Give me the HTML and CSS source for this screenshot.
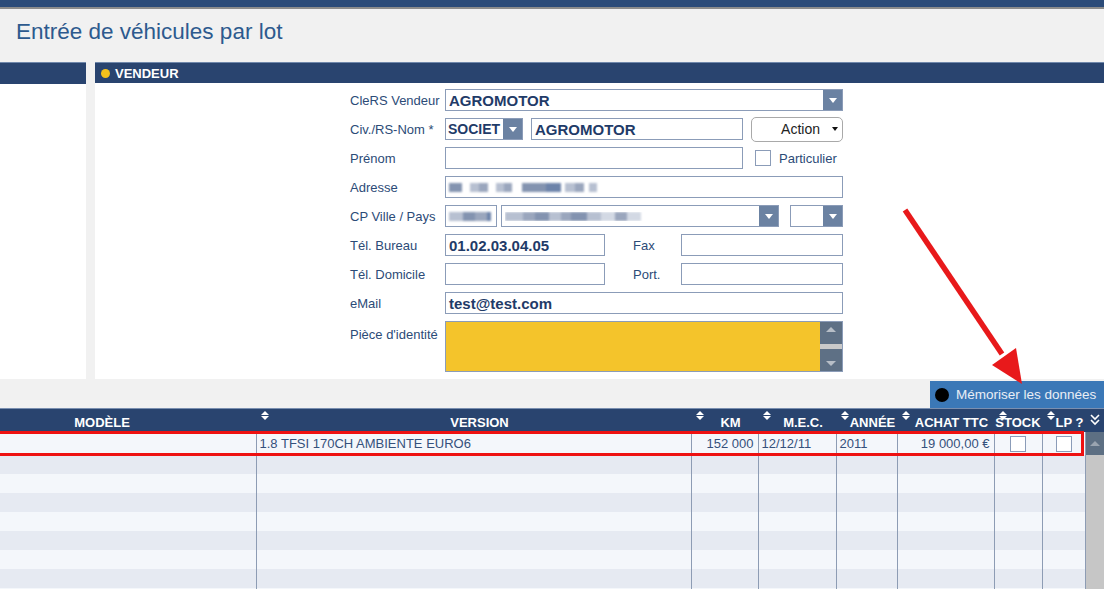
FILE: index.html
```html
<!DOCTYPE html>
<html lang="fr">
<head>
    <meta charset="UTF-8">
    <title>Entrée de véhicules par lot</title>
    <link rel="stylesheet" href="styles.css">
</head>
<body>
<div class="page">
    <div class="topbar"></div>
    <h1>Entrée de véhicules par lot</h1>

    <div class="panels">
        <div class="panel side">
            <div class="panel-head"></div>
        </div>
        <div class="panel main">
            <div class="panel-head"><span class="dot"></span>VENDEUR</div>
            <div class="form">
                <div class="row">
                    <label>CleRS Vendeur</label>
                    <div class="field select w398"><span class="val">AGROMOTOR</span><span class="drop"></span></div>
                </div>
                <div class="row">
                    <label>Civ./RS-Nom *</label>
                    <div class="field select w78 small"><span class="val">SOCIET</span><span class="drop"></span></div>
                    <div class="field w212 ml8">AGROMOTOR</div>
                    <div class="action ml8">Action <span class="caret"></span></div>
                </div>
                <div class="row">
                    <label>Prénom</label>
                    <div class="field w298"></div>
                    <span class="check ml12"></span>
                    <span class="txt ml8">Particulier</span>
                </div>
                <div class="row">
                    <label>Adresse</label>
                    <div class="field w398">
                        <span class="blur">
                            <i class="b1" style="width:13px"></i><i class="b2" style="width:9px;margin-left:8px"></i><i class="b3" style="width:9px"></i><i class="b2" style="width:8px;margin-left:8px"></i><i class="b3" style="width:8px"></i><i class="b1" style="width:24px;margin-left:10px"></i><i class="b4" style="width:15px"></i><i class="b2" style="width:10px;margin-left:4px"></i><i class="b3" style="width:9px"></i><i class="b2" style="width:8px;margin-left:5px"></i>
                        </span>
                    </div>
                </div>
                <div class="row">
                    <label>CP Ville / Pays</label>
                    <div class="field w52">
                        <span class="blur"><i class="b2" style="width:14px"></i><i class="b1" style="width:12px"></i><i class="b3" style="width:12px"></i><i class="b4" style="width:4px"></i></span>
                    </div>
                    <div class="field select w278 ml4">
                        <span class="val"><span class="blur"><i class="b2" style="width:18px"></i><i class="b3" style="width:12px"></i><i class="b1" style="width:14px"></i><i class="b2" style="width:12px"></i><i class="b3" style="width:10px"></i><i class="b1" style="width:16px"></i><i class="b2" style="width:14px"></i><i class="b5" style="width:14px"></i><i class="b3" style="width:12px"></i><i class="b5" style="width:14px"></i></span></span><span class="drop"></span>
                    </div>
                    <div class="field select w53 ml11"><span class="val"></span><span class="drop"></span></div>
                </div>
                <div class="row">
                    <label>Tél. Bureau</label>
                    <div class="field w160">01.02.03.04.05</div>
                    <span class="txt sub-label">Fax</span>
                    <div class="field w162"></div>
                </div>
                <div class="row">
                    <label>Tél. Domicile</label>
                    <div class="field w160"></div>
                    <span class="txt sub-label">Port.</span>
                    <div class="field w162"></div>
                </div>
                <div class="row">
                    <label>eMail</label>
                    <div class="field w398">test@test.com</div>
                </div>
                <div class="row tall">
                    <label>Pièce d'identité</label>
                    <div class="memo w398">
                        <div class="vscroll">
                            <span class="up"></span>
                            <span class="thumb"></span>
                            <span class="down"></span>
                        </div>
                    </div>
                </div>
            </div>
        </div>
    </div>

    <div class="save-bar">
        <div class="save-btn">Mémoriser les données</div>
    </div>

    <div class="grid">
        <table>
            <colgroup>
                <col style="width:320px"><col style="width:435px"><col style="width:67px"><col style="width:78px">
                <col style="width:61px"><col style="width:97px"><col style="width:48px"><col style="width:43px"><col style="width:19px">
            </colgroup>
            <thead>
                <tr>
                    <th>MODÈLE</th>
                    <th><span class="sort"></span>VERSION</th>
                    <th><span class="sort"></span>KM</th>
                    <th><span class="sort"></span>M.E.C.</th>
                    <th><span class="sort"></span>ANNÉE</th>
                    <th><span class="sort"></span>ACHAT TTC</th>
                    <th class="tight"><span class="sort"></span>STOCK</th>
                    <th><span class="sort"></span>LP ?</th>
                    <th class="more">
                        <svg width="10" height="13" viewBox="0 0 10 13"><path d="M1 2 L5 6 L9 2 M1 7 L5 11 L9 7" fill="none" stroke="#fff" stroke-width="1.6"/></svg>
                    </th>
                </tr>
            </thead>
            <tbody>
                <tr class="first">
                    <td></td>
                    <td>1.8 TFSI 170CH AMBIENTE EURO6</td>
                    <td class="num">152 000</td>
                    <td>12/12/11</td>
                    <td>2011</td>
                    <td class="num">19 000,00 €</td>
                    <td class="mid"><span class="check"></span></td>
                    <td class="mid"><span class="check"></span></td>
                    <td class="sc-up"><span class="up"></span></td>
                </tr>
                <tr><td></td><td></td><td></td><td></td><td></td><td></td><td></td><td></td><td class="sc-track" rowspan="8"></td></tr>
                <tr><td></td><td></td><td></td><td></td><td></td><td></td><td></td><td></td></tr>
                <tr><td></td><td></td><td></td><td></td><td></td><td></td><td></td><td></td></tr>
                <tr><td></td><td></td><td></td><td></td><td></td><td></td><td></td><td></td></tr>
                <tr><td></td><td></td><td></td><td></td><td></td><td></td><td></td><td></td></tr>
                <tr><td></td><td></td><td></td><td></td><td></td><td></td><td></td><td></td></tr>
                <tr><td></td><td></td><td></td><td></td><td></td><td></td><td></td><td></td></tr>
                <tr><td></td><td></td><td></td><td></td><td></td><td></td><td></td><td></td></tr>
            </tbody>
        </table>
        <div class="highlight"></div>
    </div>

    <svg class="arrow" width="1104" height="589" viewBox="0 0 1104 589">
        <line x1="905" y1="210" x2="1002" y2="354" stroke="#e8191b" stroke-width="5.5"/>
        <polygon points="992,365 1016,348 1022,384" fill="#e8191b"/>
    </svg>
</div>
</body>
</html>
```

FILE: styles.css
```css
body { margin: 0; font-family: "Liberation Sans", Arial, sans-serif; background: #fff; }
.page { position: relative; width: 1104px; height: 589px; background: #f1f1f1; overflow: hidden; }
.topbar { height: 7px; background: #2b4b79; border-bottom: 2px solid #8c8c8c; }
h1 { margin: 0; height: 53px; padding: 10px 0 0 16px; box-sizing: border-box; font-size: 22.5px; font-weight: normal; color: #2d5a8e; }

/* panels */
.panels { display: flex; gap: 9px; height: 317px; }
.panel { background: #fff; display: flex; flex-direction: column; }
.side { width: 86px; }
.main { flex: 1; }
.panel-head { height: 22px; box-sizing: border-box; background: #29446f; border-top: 1px solid #7088ab; color: #fff; font-weight: bold; font-size: 13px; display: flex; align-items: center; gap: 5px; padding-left: 6px; }
.dot { width: 9px; height: 9px; border-radius: 50%; background: #f4c21c; }

/* form */
.form { padding: 6px 0 0 255px; }
.row { display: flex; align-items: center; height: 22px; margin-bottom: 7px; }
.row label { width: 95px; flex: none; font-size: 13px; color: #2c4b77; white-space: nowrap; }
.row.tall { height: 51px; align-items: flex-start; }
.row.tall label { padding-top: 6px; }
.txt { font-size: 13px; color: #2c4b77; }
.sub-label { width: 48px; margin-left: 28px; }
.field { height: 22px; box-sizing: border-box; border: 1px solid #8b9cb8; background: #fff; display: flex; align-items: center; padding-left: 3px; font-weight: bold; font-size: 15px; color: #1f3b68; overflow: hidden; white-space: nowrap; flex: none; }
.field.small { font-size: 14px; padding-left: 2px; }
.select { padding-right: 0; }
.select .val { flex: 1; overflow: hidden; }
.drop { width: 19px; height: 100%; background: #6b82a2; display: flex; align-items: center; justify-content: center; flex: none; }
.drop::after { content: ""; border-left: 4px solid transparent; border-right: 4px solid transparent; border-top: 5px solid #fff; }
.action { width: 92px; height: 25px; box-sizing: border-box; border: 1px solid #a9a9a9; border-radius: 5px; background: #fff; font-size: 14px; color: #222; display: flex; align-items: center; justify-content: flex-end; gap: 12px; padding-right: 4px; flex: none; }
.caret { border-left: 3px solid transparent; border-right: 3px solid transparent; border-top: 4px solid #111; }
.check { display: inline-block; width: 16px; height: 16px; box-sizing: border-box; border: 1px solid #8b9cb8; background: #fff; flex: none; }
.memo { height: 51px; box-sizing: border-box; border: 1px solid #8b9cb8; background: #f4c42b; display: flex; justify-content: flex-end; }
.vscroll { width: 22px; background: #5e7085; display: flex; flex-direction: column; justify-content: space-between; align-items: center; padding: 5px 0; box-sizing: border-box; }
.up { border-left: 5px solid transparent; border-right: 5px solid transparent; border-bottom: 5px solid #b7bec7; }
.down { border-left: 5px solid transparent; border-right: 5px solid transparent; border-top: 5px solid #b7bec7; }
.thumb { width: 22px; height: 5px; background: #c9c9c9; }

.w52 { width: 52px; } .w53 { width: 53px; } .w78 { width: 78px; } .w160 { width: 160px; } .w162 { width: 162px; }
.w212 { width: 212px; } .w278 { width: 278px; } .w298 { width: 298px; } .w398 { width: 398px; }
.ml4 { margin-left: 4px; } .ml8 { margin-left: 8px; } .ml11 { margin-left: 11px; } .ml12 { margin-left: 12px; }

/* masked personal data */
.blur { display: flex; height: 9px; filter: blur(0.9px); }
.blur i { display: block; height: 9px; }
.b1 { background: #8393b0; } .b2 { background: #b7c0d1; } .b3 { background: #9aa6bd; } .b4 { background: #6c83aa; } .b5 { background: #d3d9e4; }

/* save button */
.save-bar { height: 29px; display: flex; justify-content: flex-end; align-items: flex-end; }
.save-btn { width: 174px; height: 27px; box-sizing: border-box; background: #3b78b7; color: #e9eef5; font-size: 13.5px; display: flex; align-items: center; gap: 7px; padding-left: 5px; white-space: nowrap; }
.save-btn::before { content: ""; width: 14px; height: 14px; border-radius: 50%; background: #000; }

/* grid */
.grid { position: relative; }
table { border-collapse: collapse; table-layout: fixed; width: 1168px; margin-left: -64px; font-size: 13px; color: #35517c; }
th { height: 23px; box-sizing: border-box; background: #29446f; border-top: 1px solid #7a8fb0; color: #fff; font-size: 13px; font-weight: bold; text-align: center; vertical-align: top; padding: 7px 0 0 12px; line-height: 14px; white-space: nowrap; position: relative; }
th.tight { padding-left: 0; }
th.more { padding: 4px 0 0; }
.sort { position: absolute; left: 5px; top: 2px; width: 8px; height: 10px; }
.sort::before, .sort::after { content: ""; position: absolute; left: 0; border-left: 4px solid transparent; border-right: 4px solid transparent; }
.sort::before { top: 0; border-bottom: 4px solid #fff; }
.sort::after { top: 5px; border-top: 4px solid #fff; }
td { height: 19px; padding: 0 3px; line-height: 16px; border-right: 1px solid #8d9cb4; white-space: nowrap; overflow: hidden; }
.grid tbody tr:nth-child(odd) td { background: #f4f7fb; }
.grid tbody tr:nth-child(even) td { background: #e6eaf2; }
tr.first td { height: 22px; padding-top: 1px; vertical-align: middle; }
td.num { text-align: right; padding-right: 4px; }
td.mid { text-align: center; }
td.mid .check { vertical-align: middle; }
.grid tbody tr td.sc-up { background: #5d6f83; text-align: center; border-right: 0; vertical-align: middle; padding: 0; }
td.sc-up .up { display: inline-block; vertical-align: middle; border-bottom-color: #9aa4b0; }
.grid tbody tr td.sc-track { background: #c6c6c6; border-right: 0; }
.highlight { position: absolute; left: -3px; top: 23px; width: 1087px; height: 25px; box-sizing: border-box; border: 3px solid #ee1111; pointer-events: none; }

.arrow { position: absolute; left: 0; top: 0; pointer-events: none; }
```
